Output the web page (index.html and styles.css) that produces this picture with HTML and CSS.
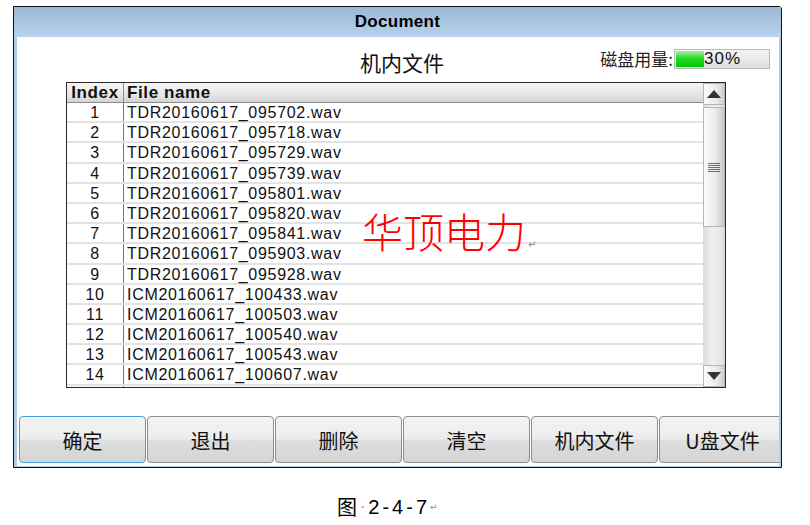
FILE: index.html
```html
<!DOCTYPE html>
<html lang="zh">
<head>
<meta charset="utf-8">
<link rel="stylesheet" href="styles.css">
</head>
<body>
<div class="window">
  <div class="frame">
    <div class="titlebar">Document</div>
    <div class="topline">
      <div class="spacer"></div>
      <div class="heading">机内文件</div>
      <div class="usage">
        <span class="usage-label">磁盘用量:</span>
        <div class="meter">
          <div class="meter-fill" style="width:28px"></div>
          <span class="meter-text">30%</span>
        </div>
      </div>
    </div>
    <div class="table">
      <div class="list">
        <div class="row head"><div class="c-idx">Index</div><div class="c-name">File name</div></div>
        <div class="row"><div class="c-idx">1</div><div class="c-name">TDR20160617_095702.wav</div></div>
        <div class="row"><div class="c-idx">2</div><div class="c-name">TDR20160617_095718.wav</div></div>
        <div class="row"><div class="c-idx">3</div><div class="c-name">TDR20160617_095729.wav</div></div>
        <div class="row"><div class="c-idx">4</div><div class="c-name">TDR20160617_095739.wav</div></div>
        <div class="row"><div class="c-idx">5</div><div class="c-name">TDR20160617_095801.wav</div></div>
        <div class="row"><div class="c-idx">6</div><div class="c-name">TDR20160617_095820.wav</div></div>
        <div class="row"><div class="c-idx">7</div><div class="c-name">TDR20160617_095841.wav</div></div>
        <div class="row"><div class="c-idx">8</div><div class="c-name">TDR20160617_095903.wav</div></div>
        <div class="row"><div class="c-idx">9</div><div class="c-name">TDR20160617_095928.wav</div></div>
        <div class="row"><div class="c-idx">10</div><div class="c-name">ICM20160617_100433.wav</div></div>
        <div class="row"><div class="c-idx">11</div><div class="c-name">ICM20160617_100503.wav</div></div>
        <div class="row"><div class="c-idx">12</div><div class="c-name">ICM20160617_100540.wav</div></div>
        <div class="row"><div class="c-idx">13</div><div class="c-name">ICM20160617_100543.wav</div></div>
        <div class="row"><div class="c-idx">14</div><div class="c-name">ICM20160617_100607.wav</div></div>
        <div class="row stub"><div class="c-idx"></div><div class="c-name"></div></div>
      </div>
      <div class="scrollbar">
        <div class="sb-btn">
          <svg width="14" height="8" viewBox="0 0 14 8"><polygon points="0,8 14,8 7,0" fill="#333"/></svg>
        </div>
        <div class="sb-track">
          <div class="sb-thumb">
            <div class="grip"></div>
          </div>
        </div>
        <div class="sb-btn">
          <svg width="14" height="8" viewBox="0 0 14 8"><polygon points="0,0 14,0 7,8" fill="#333"/></svg>
        </div>
      </div>
      <div class="watermark">华顶电力<span class="mark">↵</span></div>
    </div>
    <div class="buttons">
      <div class="btn focus">确定</div>
      <div class="btn">退出</div>
      <div class="btn">删除</div>
      <div class="btn">清空</div>
      <div class="btn">机内文件</div>
      <div class="btn">U盘文件</div>
    </div>
  </div>
</div>
<div class="caption"><span class="cap-cjk">图</span><span class="dot">·</span><span class="cap-num">2-4-7</span><span class="mark small">↵</span></div>
</body>
</html>
```

FILE: styles.css
```css
html, body {
  margin: 0;
  padding: 0;
  background: #fff;
}

body {
  font-family: "Liberation Sans", Arial, "Noto Sans CJK SC", sans-serif;
  color: #000;
}

.window {
  margin: 6px 0 0 13px;
  width: 769px;
  height: 462px;
  box-sizing: border-box;
  border: 1px solid #111;
  border-top-right-radius: 3px;
  background: #fff;
}

.frame {
  height: 100%;
  box-sizing: border-box;
  border-left: 3px solid #b3cbe6;
  border-right: 2px solid #b3cbe6;
  border-bottom: 1px solid #b3cbe6;
  display: flex;
  flex-direction: column;
}

.titlebar {
  height: 30px;
  margin-left: -3px;
  margin-right: -2px;
  background: linear-gradient(#9db8d6, #b7d2ec);
  border-top-right-radius: 3px;
  font-weight: bold;
  font-size: 17px;
  line-height: 30px;
  text-align: center;
  color: #000;
  letter-spacing: 0.3px;
}

.topline {
  height: 45px;
  display: grid;
  grid-template-columns: 1fr auto 1fr;
  align-items: center;
}

.heading {
  font-family: "Noto Sans CJK SC", sans-serif;
  font-size: 21px;
  padding-left: 8px;
  margin-top: 4px;
  color: #111;
}

.usage {
  justify-self: end;
  display: flex;
  align-items: center;
  padding-right: 9px;
  margin-top: -2px;
}

.usage-label {
  font-family: "Noto Sans CJK SC", sans-serif;
  font-size: 17px;
  color: #222;
  margin-right: 1px;
}

.meter {
  position: relative;
  width: 96px;
  height: 20px;
  box-sizing: border-box;
  border: 1px solid #b8b8b8;
  background: linear-gradient(#f4f4f4, #dedede);
  display: flex;
  align-items: center;
}

.meter-fill {
  height: 16px;
  margin-left: 1px;
  background: linear-gradient(#a6f0a6 0%, #27d827 45%, #00c800 100%);
}

.meter-text {
  font-size: 17px;
  letter-spacing: 1px;
  margin-left: 0;
  line-height: 18px;
  color: #111;
}

.table {
  position: relative;
  margin-left: 49px;
  width: 660px;
  height: 306px;
  box-sizing: border-box;
  border: 1px solid #2a2a2a;
  display: flex;
  overflow: hidden;
}

.list {
  flex: 1;
  overflow: hidden;
}

.row {
  display: flex;
  height: 18.2px;
  border-bottom: 2px solid #e3e3e3;
  font-size: 16px;
  line-height: 19px;
  letter-spacing: 0.7px;
  color: #111;
}

.row.head {
  height: 19px;
  border-bottom: 1px solid #8c8c8c;
  background: linear-gradient(#f6f6f6, #e6e6e6 60%, #d4d4d4);
  font-weight: bold;
  font-size: 17px;
  line-height: 19px;
  letter-spacing: 0.6px;
}

.c-idx {
  width: 56px;
  text-align: center;
  border-right: 1px solid #777;
  flex: none;
}

.row.head .c-idx {
  border-right-color: #8c8c8c;
}

.c-name {
  padding-left: 3px;
  white-space: nowrap;
}

.scrollbar {
  width: 22px;
  flex: none;
  display: flex;
  flex-direction: column;
  background: linear-gradient(90deg, #dcdcdc, #f0f0f0 40%, #e8e8e8 80%, #d6d6d6);
}

.sb-btn {
  height: 22px;
  box-sizing: border-box;
  border: 1px solid #b5b5b5;
  background: linear-gradient(90deg, #fbfbfb, #ececec 60%, #cfcfcf);
  display: flex;
  align-items: center;
  justify-content: center;
}

.sb-track {
  flex: 1;
  padding-top: 2px;
}

.sb-thumb {
  height: 120px;
  box-sizing: border-box;
  border: 1px solid #b5b5b5;
  background: linear-gradient(90deg, #fafafa, #ededed 55%, #c8c8c8);
  display: flex;
  align-items: center;
  justify-content: center;
}

.grip {
  width: 12px;
  height: 9px;
  background: repeating-linear-gradient(#707070 0 1px, transparent 1px 2px);
}

.watermark {
  position: absolute;
  left: 295px;
  top: 125px;
  font-family: "Noto Sans CJK SC", sans-serif;
  font-weight: 300;
  font-size: 41px;
  line-height: 44px;
  color: #ff0000;
  letter-spacing: 0;
}

.mark {
  font-family: "DejaVu Sans", sans-serif;
  font-size: 10px;
  color: #888;
  font-weight: normal;
  vertical-align: baseline;
  margin-left: 2px;
}

.buttons {
  margin-top: 28px;
  padding-left: 2px;
  display: flex;
  gap: 1px;
  overflow: hidden;
}

.btn {
  flex: none;
  width: 127px;
  height: 47px;
  box-sizing: border-box;
  border: 1px solid #8d8d8d;
  border-radius: 4px;
  background: linear-gradient(#f3f3f3 0%, #ececec 48%, #dedede 52%, #d5d5d5 100%);
  font-family: "Noto Sans CJK SC", sans-serif;
  font-size: 20px;
  line-height: 47px;
  text-align: center;
  color: #111;
}

.btn.focus {
  border-color: #3fa3e0;
}

.caption {
  margin-top: 26px;
  padding-left: 337px;
  font-size: 20px;
  line-height: 26px;
  color: #000;
  display: flex;
  align-items: center;
}

.cap-cjk {
  font-family: "Noto Sans CJK SC", sans-serif;
  font-size: 20px;
}

.dot {
  color: #888;
  margin: 0 3px 0 3px;
  font-size: 16px;
}

.cap-num {
  font-family: "Liberation Sans", sans-serif;
  font-size: 20px;
  letter-spacing: 3px;
}

.mark.small {
  font-size: 9px;
  margin-left: 0;
  align-self: flex-end;
}
```
